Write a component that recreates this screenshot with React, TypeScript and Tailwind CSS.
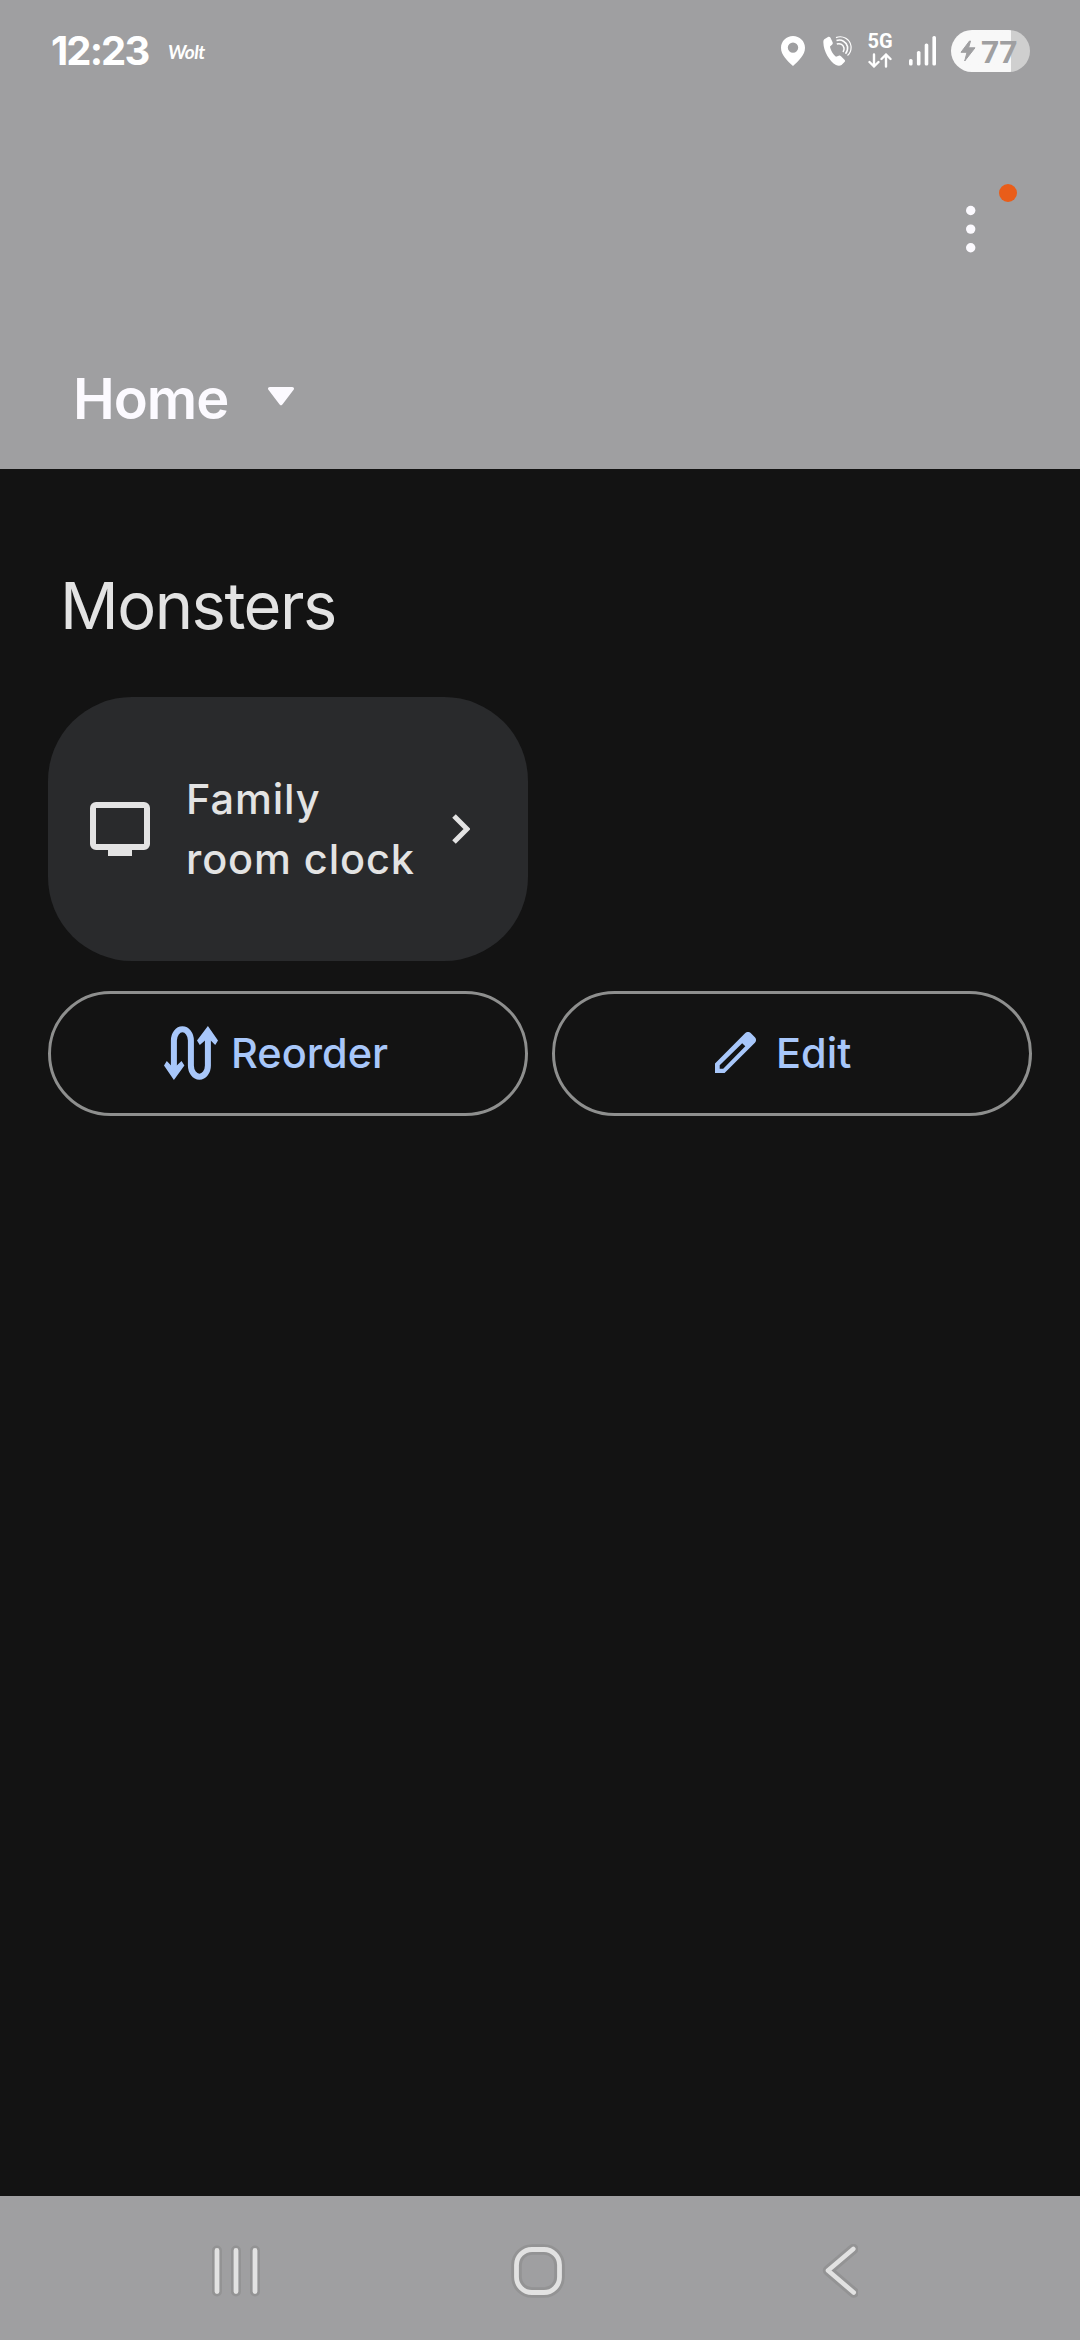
import React from 'react';
import { clsx } from 'clsx';

interface OutlineButtonProps {
  icon: React.ReactNode;
  label: string;
  className?: string;
}

function StatusBar() {
  return (
    <div className="h-[102px] flex items-center justify-between pl-[51px] pr-[50px] text-white">
      <div className="flex items-center">
        <span className="w-[117px] text-[40px] leading-[48px] font-bold tracking-[-1.9px] whitespace-nowrap">12:23</span>
        <span className="pt-0.5 font-['Lato'] text-[19px] leading-6 font-bold italic tracking-[-0.5px]">Wolt</span>
      </div>
      <div className="flex items-center">
        <svg className="w-6 h-[30px] mr-[18px]" viewBox="0 0 24 30" fill="currentColor">
          <path fillRule="evenodd" d="M12 0C5.4 0 0 5.1 0 11.8C0 19 6.2 24.7 12 30C17.8 24.7 24 19 24 11.8C24 5.1 18.6 0 12 0ZM12 6.4a5.2 5.2 0 1 1 0 10.4a5.2 5.2 0 0 1 0-10.4Z" />
        </svg>
        <svg className="w-[29px] h-[30px] mr-4" viewBox="0 0 29 30" fill="none">
          <path d="M1.3 3.2L5 0.9C6 0.4 7 0.8 7.5 1.7L9.6 6.2C10 7.3 9.7 8 9 8.7L7 10.4C7.5 14 10.2 18.4 13 20.7L15.7 19.7C16.6 19.4 17.3 19.6 18 20.3L21.5 23.7C22.2 24.5 22.2 25.3 21.5 26.1L18.5 29C17 30 14.8 29.9 13 29C6.5 25.5 0.5 15 0.4 7C0.3 5.2 0.4 4 1.3 3.2Z" fill="currentColor" />
          <path d="M13 1.6C20 -1.2 27 3.5 28 10C28.4 14 26.8 17.5 24.5 19.5" stroke="currentColor" strokeWidth="1.2" />
          <path d="M13.5 4.6C18.5 2.8 23.5 6 24.5 10.5C25 13.5 24 16 22.5 17.8" stroke="currentColor" strokeWidth="1.6" />
          <path d="M13.8 8C17.5 6.8 20.3 8.8 21 12C21.3 13.8 20.8 15 20 16" stroke="currentColor" strokeWidth="1.5" />
        </svg>
        <div className="w-6 h-[34px] mr-[17px] flex flex-col items-center justify-between">
          <span className="font-['Roboto'] text-[20px] leading-[15px] font-bold">5G</span>
          <svg className="w-6 h-[15px]" viewBox="0 0 24 15" fill="none" stroke="currentColor" strokeWidth="2.4" strokeLinecap="round" strokeLinejoin="round">
            <path d="M6 1.5V13.5M1.5 9L6 13.5L10.5 9" />
            <path d="M18 13.5V1.5M13.5 6L18 1.5L22.5 6" />
          </svg>
        </div>
        <svg className="w-[27px] h-[30px] mr-[15px]" viewBox="0 0 27 30" fill="currentColor">
          <rect x="0" y="23" width="3.6" height="6.5" rx="1.6" />
          <rect x="7.9" y="15" width="3.6" height="14.5" rx="1.6" />
          <rect x="15.7" y="7.5" width="3.6" height="22" rx="1.6" />
          <rect x="23.4" y="0" width="3.6" height="29.5" rx="1.6" />
        </svg>
        <div className="w-[79px] h-[42px] rounded-full bg-linear-to-r from-[#f8f8f8] from-[76%] to-[#cfcfcf] to-[76%] flex items-center pl-[9px] text-[#9f9fa1]">
          <svg className="w-4 h-[22px]" viewBox="0 0 16 22" fill="currentColor" stroke="currentColor" strokeWidth="1" strokeLinejoin="round">
            <path d="M9.5 1L1 12.3H7L4.7 21L15 7.8H8.6L10.5 1Z" />
          </svg>
          <span className="pl-[5px] pt-px font-['Roboto'] text-[32px] leading-[42px] font-bold">77</span>
        </div>
      </div>
    </div>
  );
}

function Header() {
  return (
    <header className="h-[469px] bg-[#9f9fa1] flex flex-col">
      <StatusBar />
      <div className="flex justify-end pt-[82px] pr-[62px]">
        <svg className="w-[58px] h-[70px]" viewBox="0 0 58 70" fill="#fcfaff">
          <circle cx="10.7" cy="26.5" r="4.7" />
          <circle cx="10.7" cy="45.1" r="4.7" />
          <circle cx="10.7" cy="63.8" r="4.7" />
          <circle cx="48" cy="9" r="9" fill="#e95d19" />
        </svg>
      </div>
      <div className="mt-auto h-[108px] pl-[73px] flex items-start text-[#fcfaff]">
        <h1 className="w-[195px] text-[56px] leading-[76px] font-semibold tracking-[-1px]">Home</h1>
        <svg className="w-[26px] h-[19px] mt-[26px]" viewBox="0 0 26 19" fill="currentColor">
          <path d="M1.8 0H24.2C25.8 0 26.5 1.6 25.6 2.8L14.4 17.6C13.6 18.7 12.4 18.7 11.6 17.6L0.4 2.8C-0.5 1.6 0.2 0 1.8 0Z" />
        </svg>
      </div>
    </header>
  );
}

function DeviceCard() {
  return (
    <div className="w-[480px] h-[264px] rounded-[84px] bg-[#292a2c] flex items-center justify-between pl-[42px] pr-[58px]">
      <svg className="w-[60px] h-[54px]" viewBox="0 0 60 54" fill="currentColor">
        <path fillRule="evenodd" d="M6 0H54A6 6 0 0 1 60 6V42A6 6 0 0 1 54 48H42V54H18V48H6A6 6 0 0 1 0 42V6A6 6 0 0 1 6 0ZM6 6V42H54V6Z" />
      </svg>
      <p className="flex-1 pl-9 text-[41.5px] leading-[60px] font-medium tracking-[0.9px]">
        <span className="block">Family</span>
        <span className="block whitespace-nowrap">room clock</span>
      </p>
      <svg className="w-[18px] h-[30px]" viewBox="0 0 18 30" fill="none" stroke="currentColor" strokeWidth="5">
        <path d="M2 2L15 15L2 28" />
      </svg>
    </div>
  );
}

function OutlineButton({ icon, label, className }: OutlineButtonProps) {
  return (
    <button className={clsx('w-[480px] h-[125px] rounded-full border-3 border-[#8e8f8e] text-[#a8c7fa] flex items-center pb-0.5', className)}>
      {icon}
      <span className="text-[41.5px] leading-[60px] font-medium">{label}</span>
    </button>
  );
}

function ReorderIcon() {
  return (
    <svg className="w-[54px] h-[54px] mr-[13px]" viewBox="0 0 54 54" fill="none">
      <path d="M9.9 44V14.5A8.5 11.2 0 0 1 26.9 14.5V39.5A8.5 11.2 0 0 0 43.9 39.5V10" stroke="currentColor" strokeWidth="6" />
      <path d="M0 39.5L2.8 35L7.3 39.8H12.5L17.5 35L20.4 39.5L9.9 54Z" fill="currentColor" />
      <path d="M33 14.5L35.8 19L41.3 14.2H46.5L51.2 19L54 14.5L43.9 0Z" fill="currentColor" />
    </svg>
  );
}

function EditIcon() {
  return (
    <svg className="w-[41px] h-[41px] mr-[20px]" viewBox="0 0 41 41" fill="currentColor">
      <path fillRule="evenodd" d="M0 41V31.4L30.3 1.1C31.8 -0.4 34.2 -0.4 35.7 1.1L39.9 5.3C41.4 6.8 41.4 9.2 39.9 10.7L9.6 41ZM4.7 33.3V36.8H8.2L30.3 14.3L27.2 11.2Z" />
    </svg>
  );
}

function NavBar() {
  return (
    <nav className="h-[144px] bg-[#9f9fa1] flex items-start pt-12 pl-[209px]">
      <svg className="w-[54px] h-[54px]" viewBox="0 0 54 54" strokeLinecap="round">
        <path d="M8 6.5V47.5M27 6.5V47.5M46 6.5V47.5" stroke="#939394" strokeWidth="10" />
        <path d="M8 6.5V47.5M27 6.5V47.5M46 6.5V47.5" stroke="#e2e2e2" strokeWidth="4.8" />
      </svg>
      <svg className="w-[54px] h-[54px] ml-[248px]" viewBox="0 0 54 54" fill="none">
        <rect x="5.5" y="5.5" width="43" height="43" rx="15.5" stroke="#939394" strokeWidth="10.6" />
        <rect x="5.5" y="5.5" width="43" height="43" rx="15.5" stroke="#e2e2e2" strokeWidth="4.8" />
      </svg>
      <svg className="w-9 h-[54px] ml-[257px]" viewBox="0 0 36 54" fill="none" strokeLinecap="round" strokeLinejoin="round">
        <path d="M31.3 5L6 26.5L31.7 48.5" stroke="#939394" strokeWidth="10.4" />
        <path d="M31.3 5L6 26.5L31.7 48.5" stroke="#e2e2e2" strokeWidth="4.6" />
      </svg>
    </nav>
  );
}

export default function App() {
  return (
    <div className="w-[1080px] h-[2340px] flex flex-col overflow-hidden bg-[#131313] font-['Inter',sans-serif]">
      <Header />
      <main className="flex-1 px-12 pt-24 text-[#e3e3e3]">
        <h2 className="h-[132px] pl-3 text-[65px] leading-[82px] font-normal tracking-[-1.5px]">Monsters</h2>
        <DeviceCard />
        <div className="pt-[30px] flex gap-6">
          <OutlineButton icon={<ReorderIcon />} label="Reorder" className="pl-[113px]" />
          <OutlineButton icon={<EditIcon />} label="Edit" className="pl-[160px]" />
        </div>
      </main>
      <NavBar />
    </div>
  );
}
